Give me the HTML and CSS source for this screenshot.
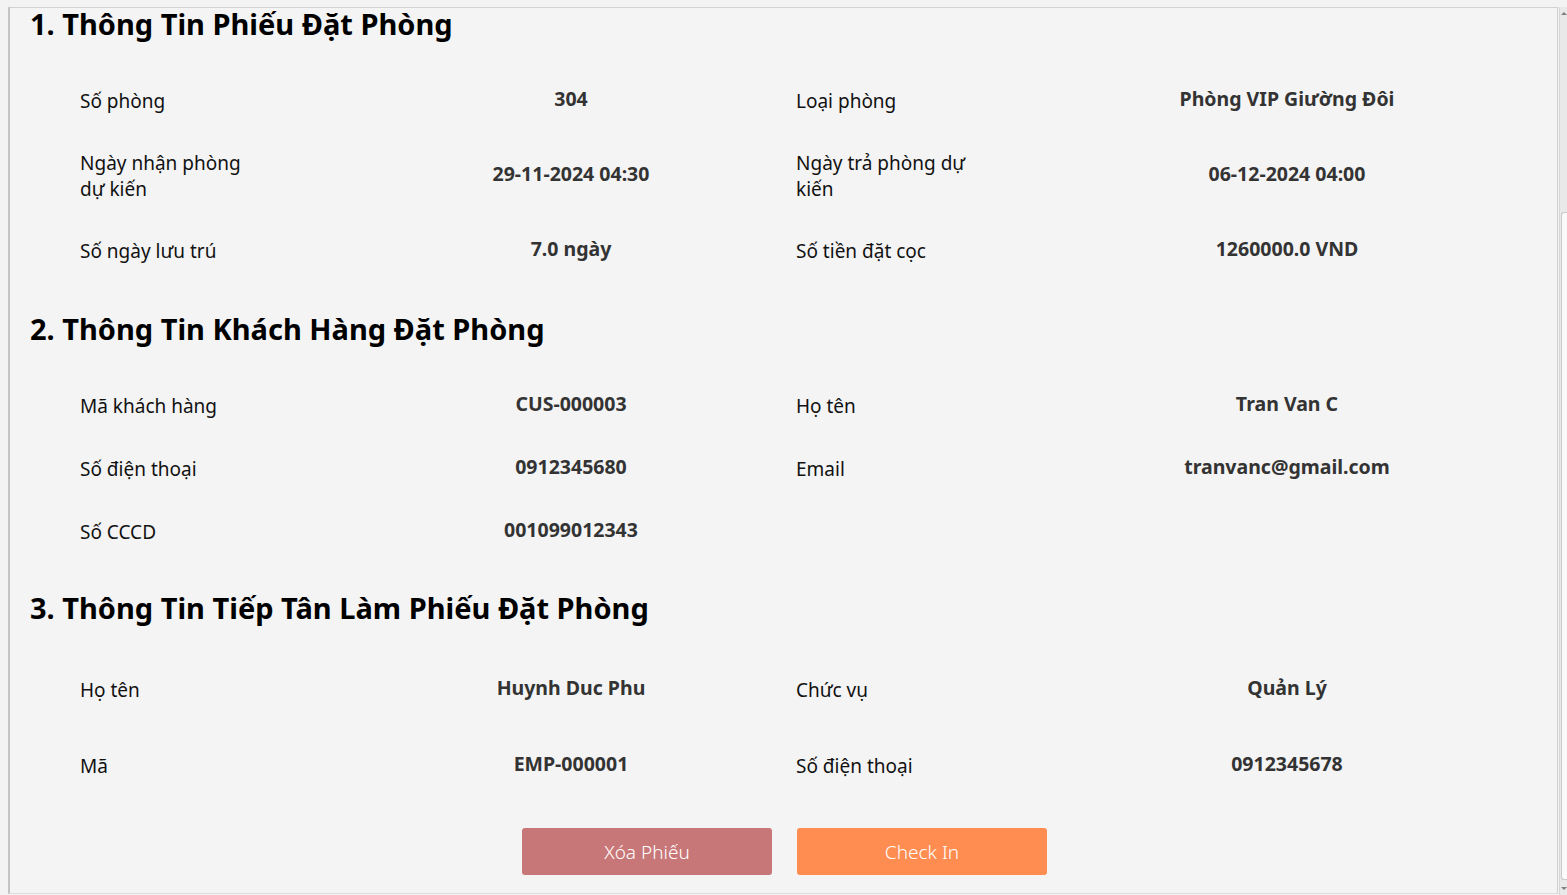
FILE: index.html
```html
<!DOCTYPE html>
<html lang="vi">
<head>
<meta charset="utf-8">
<title>Phiếu Đặt Phòng</title>
<link rel="stylesheet" href="styles.css">
</head>
<body>
<div class="window">
  <main class="panel">
    <section class="section sec-1">
      <h2 class="title">1. Thông Tin Phiếu Đặt Phòng</h2>
      <div class="grid rows-75">
        <div class="field"><span class="label">Số phòng</span><span class="value">304</span></div>
        <div class="field"><span class="label">Loại phòng</span><span class="value">Phòng VIP Giường Đôi</span></div>
        <div class="field"><span class="label">Ngày nhận phòng dự kiến</span><span class="value">29-11-2024 04:30</span></div>
        <div class="field"><span class="label">Ngày trả phòng dự kiến</span><span class="value">06-12-2024 04:00</span></div>
        <div class="field"><span class="label">Số ngày lưu trú</span><span class="value">7.0 ngày</span></div>
        <div class="field"><span class="label">Số tiền đặt cọc</span><span class="value">1260000.0 VND</span></div>
      </div>
    </section>
    <section class="section sec-2">
      <h2 class="title">2. Thông Tin Khách Hàng Đặt Phòng</h2>
      <div class="grid rows-63">
        <div class="field"><span class="label">Mã khách hàng</span><span class="value">CUS-000003</span></div>
        <div class="field"><span class="label">Họ tên</span><span class="value">Tran Van C</span></div>
        <div class="field"><span class="label">Số điện thoại</span><span class="value">0912345680</span></div>
        <div class="field"><span class="label">Email</span><span class="value">tranvanc@gmail.com</span></div>
        <div class="field"><span class="label">Số CCCD</span><span class="value">001099012343</span></div>
      </div>
    </section>
    <section class="section sec-3">
      <h2 class="title">3. Thông Tin Tiếp Tân Làm Phiếu Đặt Phòng</h2>
      <div class="grid rows-76">
        <div class="field"><span class="label">Họ tên</span><span class="value">Huynh Duc Phu</span></div>
        <div class="field"><span class="label">Chức vụ</span><span class="value">Quản Lý</span></div>
        <div class="field"><span class="label">Mã</span><span class="value">EMP-000001</span></div>
        <div class="field"><span class="label">Số điện thoại</span><span class="value">0912345678</span></div>
      </div>
    </section>
    <div class="actions">
      <button class="btn btn-delete" type="button">Xóa Phiếu</button>
      <button class="btn btn-checkin" type="button">Check In</button>
    </div>
  </main>
  <div class="scrollbar">
    <span class="arrow arrow-up"></span>
    <div class="track"><div class="thumb"></div></div>
    <span class="arrow arrow-down"></span>
  </div>
</div>
</body>
</html>
```

FILE: styles.css
```css
* { box-sizing: border-box; }
html, body {
  margin: 0;
  padding: 0;
  background: #f3f3f3;
  width: 1567px;
  height: 895px;
  overflow: hidden;
  font-family: "Noto Sans", "Open Sans", sans-serif;
  color: #111;
}
.window {
  display: flex;
  height: 895px;
  padding: 7px 0 0 8px;
}
.panel {
  flex: 1;
  height: 887px;
  border-top: 1px solid #d2d2d2;
  border-left: 2px solid #c4c4c4;
  border-right: 1px solid #cfcfcf;
  border-bottom: 1px solid #dedede;
  background: #f4f4f4;
  display: flex;
  flex-direction: column;
}
.section { display: flex; flex-direction: column; }
.title {
  margin: 0;
  padding-left: 20px;
  font-size: 29px;
  line-height: 32px;
  font-weight: 700;
  color: #000;
  letter-spacing: 0;
}
.grid {
  display: grid;
  grid-template-columns: 716px 716px;
  padding-left: 70px;
}
.field {
  display: flex;
  align-items: center;
}
.rows-75 .field { height: 75px; }
.rows-63 .field { height: 63px; }
.rows-76 .field { height: 76px; }
.sec-1 .grid { margin-top: 23px; }
.sec-2 { margin-top: 25px; }
.sec-2 .grid { margin-top: 29px; }
.sec-3 { margin-top: 29px; }
.sec-3 .grid { margin-top: 28px; }
.label {
  width: 180px;
  margin-right: 86px;
  font-size: 19px;
  line-height: 26px;
  color: #111;
}
.value {
  width: 450px;
  text-align: center;
  font-size: 19.5px;
  line-height: 26px;
  font-weight: 700;
  color: #333;
  margin-top: -4px;
}
.actions {
  display: flex;
  justify-content: center;
  gap: 25px;
  margin-top: 24px;
  padding-left: 2px;
}
.btn {
  width: 250px;
  height: 47px;
  border: none;
  border-radius: 3px;
  color: #fff;
  font-family: "Noto Sans", "Open Sans", sans-serif;
  font-size: 19px;
  font-weight: 300;
  cursor: pointer;
}
.btn-delete { background: #c87778; }
.btn-checkin { background: #ff8c51; }
.scrollbar {
  width: 8px;
  height: 888px;
  margin-left: 1px;
  background: #e9e9e9;
  border-left: 1px solid #d6d6d6;
  display: flex;
  flex-direction: column;
  align-items: center;
}
.arrow {
  display: block;
  width: 0;
  height: 0;
  border-left: 3px solid transparent;
  border-right: 3px solid transparent;
  margin: 5px 0;
}
.arrow-up { border-bottom: 3px solid #808080; }
.arrow-down { border-top: 3px solid #808080; }
.track {
  flex: 1;
  width: 100%;
  display: flex;
  flex-direction: column;
  justify-content: flex-end;
  padding-left: 1px;
}
.thumb {
  height: 668px;
  margin-bottom: 2px;
  background: #fafafa;
  border: 1px solid #c9c9c9;
  border-right: none;
  border-radius: 3px 0 0 3px;
}
```
